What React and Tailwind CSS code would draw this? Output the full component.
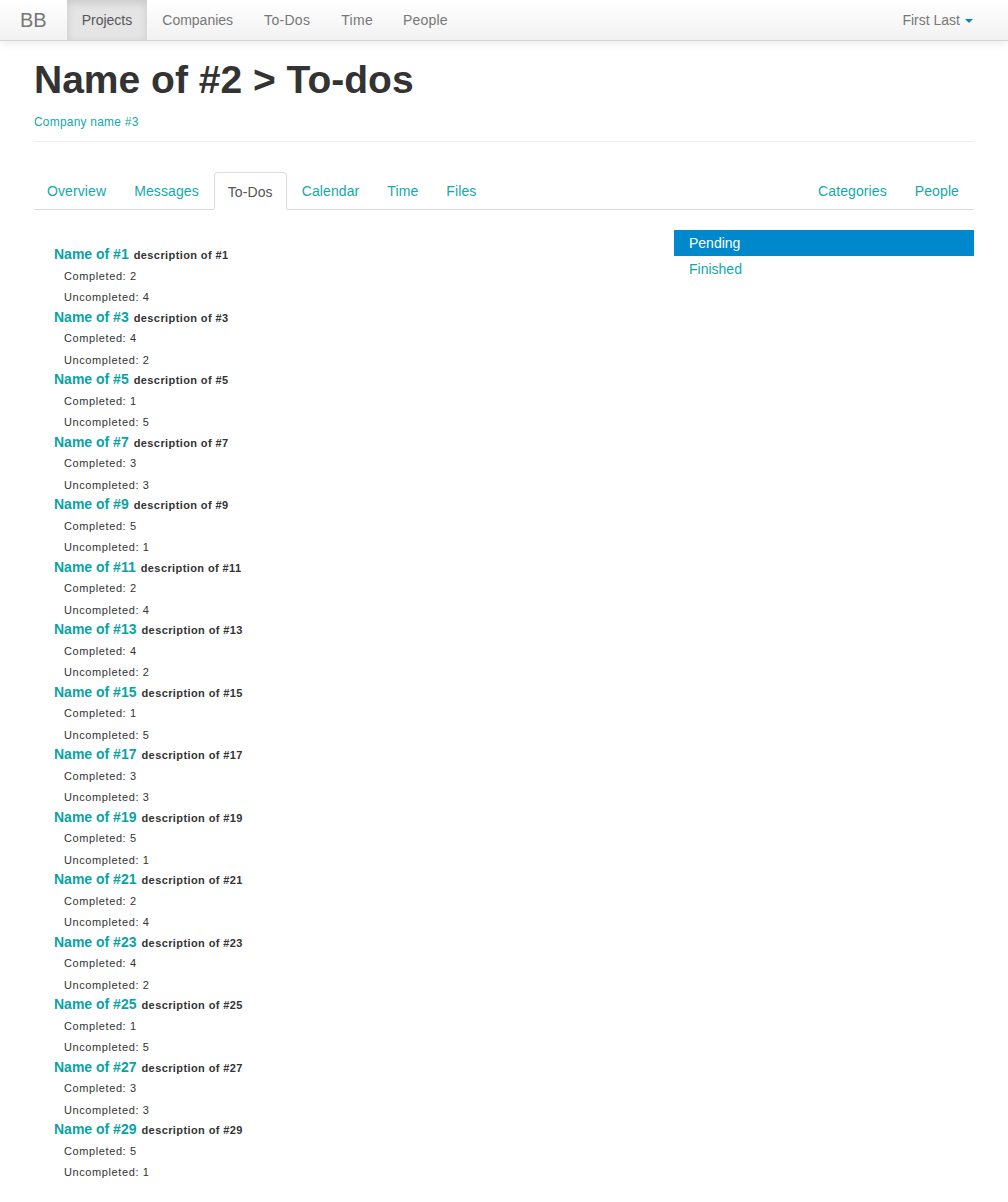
import React from "react";

const items = [];
for (let i = 0; i < 15; i++) {
  const n = 2 * i + 1;
  const comp = [2, 4, 1, 3, 5][i % 5];
  const unc = [4, 2, 5, 3, 1][i % 5];
  items.push({ n, comp, unc });
}

const font = { fontFamily: '"Liberation Sans", Arial, sans-serif' };

function Navbar() {
  return (
    <div className="h-[41px] border-b border-[#d4d4d4] bg-gradient-to-b from-white to-[#f2f2f2] shadow-[0_1px_10px_rgba(0,0,0,0.1)] flex items-stretch">
      <div className="pl-5 pr-5 flex items-center text-[20px] text-[#777] leading-5">BB</div>
      <div className="flex items-stretch text-[14px] text-[#777]">
        <div className="px-[15px] flex items-center bg-[#e5e5e5] shadow-[inset_0_3px_8px_rgba(0,0,0,0.125)] text-[#555]">Projects</div>
        <div className="px-[15px] flex items-center">Companies</div>
        <div className="px-[16px] flex items-center tracking-[0.3px]">To-Dos</div>
        <div className="px-[15px] flex items-center tracking-[0.3px]">Time</div>
        <div className="px-[15px] flex items-center tracking-[0.2px]">People</div>
      </div>
      <div className="ml-auto pr-[35px] flex items-center text-[14px] text-[#777]">
        First Last
        <span className="ml-[5px] inline-block w-0 h-0 border-l-[4px] border-r-[4px] border-t-[4px] border-l-transparent border-r-transparent border-t-[#0088cc] mt-[1px]"></span>
      </div>
    </div>
  );
}

function Tab({ children, active }) {
  if (active) {
    return (
      <div className="px-[13px] pt-[2px] h-[38px] flex items-center mr-[2px] border border-[#ddd] border-b-white bg-white rounded-t-[4px] text-[#555] -mb-px tracking-[0.1px]">
        {children}
      </div>
    );
  }
  return (
    <div className="px-[13px] pt-[2px] h-[37px] flex items-center mr-[2px] text-[#11a9a9] tracking-[0.1px]">{children}</div>
  );
}

export default function App() {
  return (
    <div className="bg-white min-h-[1202px] text-[#333]" style={font}>
      <Navbar />
      <div className="w-[940px] mx-auto">
        <div className="mt-[19px] pb-[9px] border-b border-[#eee]">
          <h1 className="text-[39px] font-bold leading-[40px] text-[#333]">Name of #2 &gt; To-dos</h1>
          <div className="mt-[12px] leading-[20px] text-[11.9px] tracking-[0.27px] text-[#11a9a9]">Company name #3</div>
        </div>
        <div className="mt-[30px] flex items-end border-b border-[#ddd] text-[14px] h-[38px]">
          <Tab>Overview</Tab>
          <Tab>Messages</Tab>
          <Tab active>To-Dos</Tab>
          <Tab>Calendar</Tab>
          <Tab>Time</Tab>
          <Tab>Files</Tab>
          <div className="ml-auto flex">
            <Tab>Categories</Tab>
            <Tab>People</Tab>
          </div>
        </div>
        <div className="mt-5 flex gap-5">
          <div className="w-[620px] pl-5 pt-[14px]">
            {items.map((it) => (
              <div key={it.n}>
                <div className="h-[20.5px] leading-[20px] flex items-baseline gap-[5px]">
                  <span className="text-[14px] font-bold text-[#0aa3a3]">Name of #{it.n}</span>
                  <span className="text-[11px] font-bold tracking-[0.4px] text-[#333]">description of #{it.n}</span>
                </div>
                <div className="pl-[10px] text-[11px] tracking-[0.6px] leading-[21px] text-[#333]">
                  <div className="h-[21.5px] pt-px">Completed: {it.comp}</div>
                  <div className="h-[20.5px] pt-px">Uncompleted: {it.unc}</div>
                </div>
              </div>
            ))}
          </div>
          <div className="w-[300px] text-[14px]">
            <div className="h-[26px] leading-[26px] px-[15px] bg-[#0088cc] text-white">Pending</div>
            <div className="h-[26px] leading-[26px] px-[15px] text-[#11a9a9]">Finished</div>
          </div>
        </div>
      </div>
    </div>
  );
}
